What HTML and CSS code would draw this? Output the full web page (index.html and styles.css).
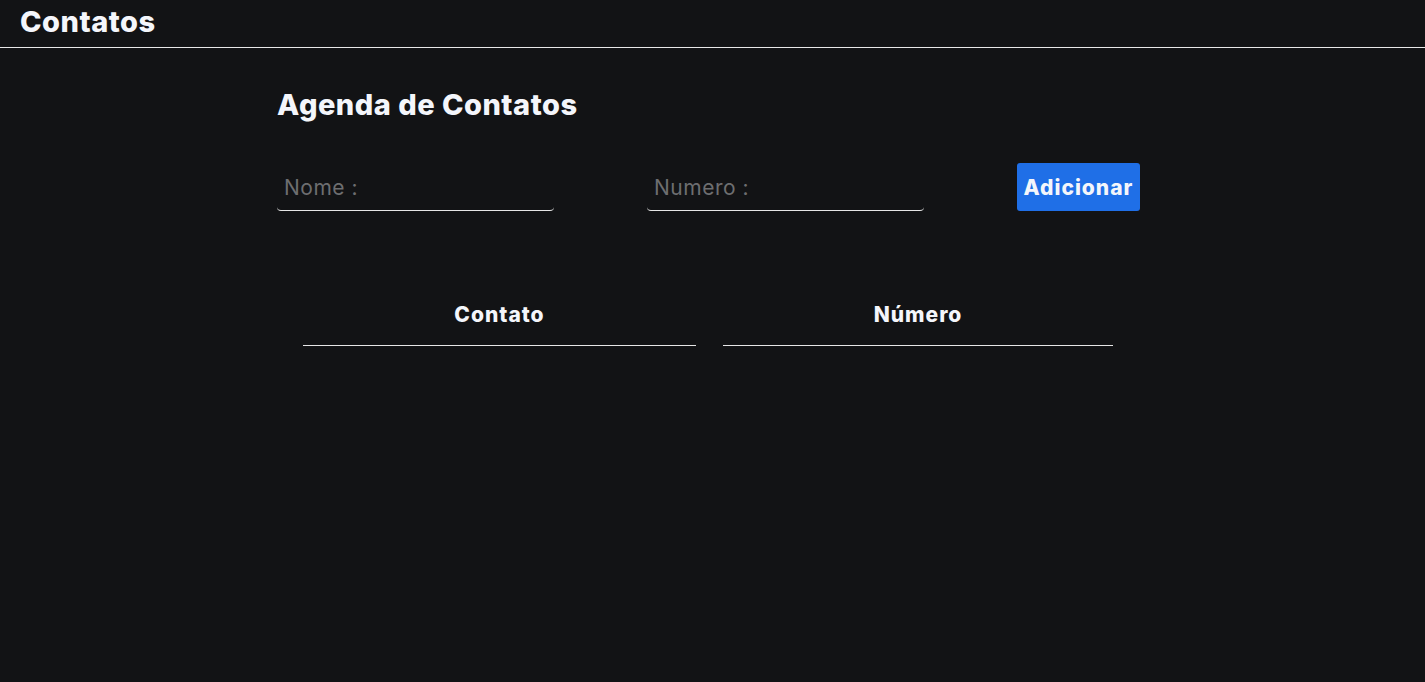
FILE: index.html
```html
<!DOCTYPE html>
<html lang="pt-BR">
<head>
<meta charset="utf-8">
<title>Contatos</title>
<link rel="stylesheet" href="styles.css">
</head>
<body>
<header class="topbar">
  <h1 class="brand">Contatos</h1>
</header>
<main class="container">
  <h2 class="title">Agenda de Contatos</h2>
  <form class="form">
    <input class="field" type="text" placeholder="Nome :">
    <input class="field" type="text" placeholder="Numero :">
    <button class="btn" type="button">Adicionar</button>
  </form>
  <table class="table">
    <thead>
      <tr><th>Contato</th><th>Número</th></tr>
    </thead>
    <tbody></tbody>
  </table>
</main>
</body>
</html>
```
FILE: styles.css
```css
* { box-sizing: border-box; }
html, body { margin: 0; padding: 0; }
body {
  background: #121315;
  color: #f4f6fb;
  font-family: Inter, "Noto Sans", "Liberation Sans", sans-serif;
  min-height: 682px;
}
.topbar {
  height: 48px;
  border-bottom: 1px solid #e8e8e8;
  padding: 0 20px;
  display: flex;
  align-items: center;
}
.brand {
  margin: 0 0 4px;
  font-size: 29px;
  font-weight: 800;
  letter-spacing: 0.5px;
  color: #f4f6fb;
}
.container {
  width: 871px;
  margin: 0 auto;
  padding-top: 40px;
}
.title {
  margin: 0;
  font-size: 29px;
  font-weight: 800;
  line-height: 34px;
  letter-spacing: 0.5px;
}
.form {
  display: flex;
  align-items: flex-end;
  gap: 93px;
  margin-top: 41px;
}
.field {
  width: 277px;
  height: 40px;
  background: transparent;
  border: none;
  border-bottom: 1px solid #e6e6e6;
  border-radius: 0 0 4px 4px;
  padding: 0 7px 6px;
  font-family: inherit;
  font-size: 21px;
  letter-spacing: 0.5px;
  color: #ddd;
  outline: none;
}
.field::placeholder { color: #6d6e70; font-weight: 400; }
.btn {
  height: 48px;
  width: 123px;
  padding: 0;
  background: #1f6fe7;
  color: #f4f6fb;
  border: none;
  border-radius: 3px;
  font-family: inherit;
  font-size: 21px;
  font-weight: 800;
  letter-spacing: 1px;
  cursor: pointer;
}
.table {
  width: 864px;
  margin: 85px 0 0 -1px;
  border-collapse: separate;
  border-spacing: 27px 0;
  table-layout: fixed;
}
.table th {
  font-size: 21px;
  font-weight: 800;
  letter-spacing: 1px;
  height: 50px;
  padding: 0 0 12px;
  border-bottom: 1px solid #e6e6e6;
  text-align: center;
  vertical-align: middle;
}
.table th:first-child { width: 393px; }
```
